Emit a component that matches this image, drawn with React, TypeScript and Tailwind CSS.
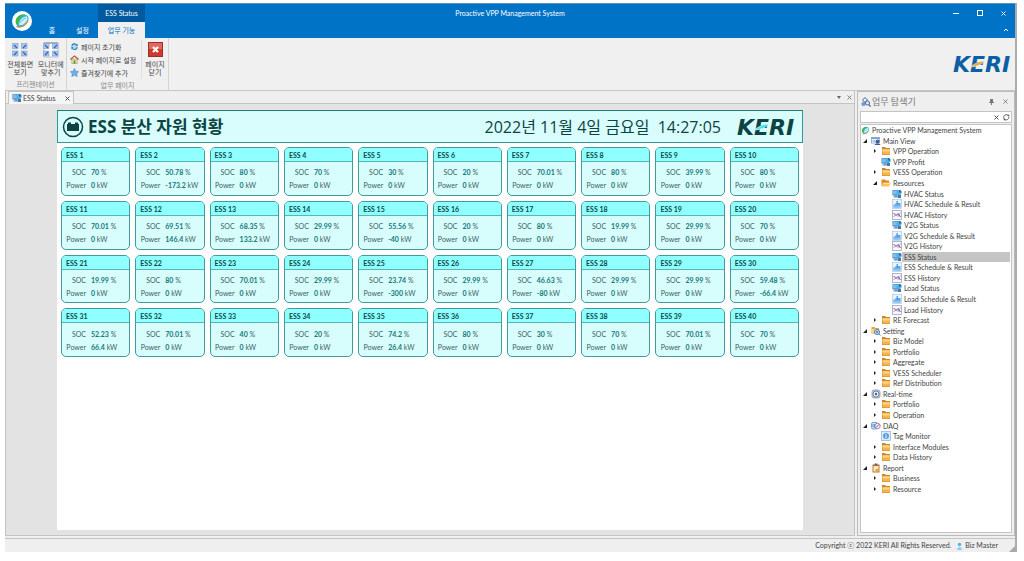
import React, { useState } from "react";

type Unit = { soc: string; power: string };

type IconName =
  | "globe"
  | "view"
  | "folder"
  | "open"
  | "status"
  | "schedule"
  | "history"
  | "setting"
  | "realtime"
  | "daq"
  | "tag"
  | "report";

type Node = {
  label: string;
  level: number;
  icon: IconName;
  state?: "open" | "closed";
};

const units: Unit[] = [
  { soc: "70", power: "0" },
  { soc: "50.78", power: "-173.2" },
  { soc: "80", power: "0" },
  { soc: "70", power: "0" },
  { soc: "30", power: "0" },
  { soc: "20", power: "0" },
  { soc: "70.01", power: "0" },
  { soc: "80", power: "0" },
  { soc: "39.99", power: "0" },
  { soc: "80", power: "0" },
  { soc: "70.01", power: "0" },
  { soc: "69.51", power: "146.4" },
  { soc: "68.35", power: "133.2" },
  { soc: "29.99", power: "0" },
  { soc: "55.56", power: "-40" },
  { soc: "20", power: "0" },
  { soc: "80", power: "0" },
  { soc: "19.99", power: "0" },
  { soc: "29.99", power: "0" },
  { soc: "70", power: "0" },
  { soc: "19.99", power: "0" },
  { soc: "80", power: "0" },
  { soc: "70.01", power: "0" },
  { soc: "29.99", power: "0" },
  { soc: "23.74", power: "-300" },
  { soc: "29.99", power: "0" },
  { soc: "46.63", power: "-80" },
  { soc: "29.99", power: "0" },
  { soc: "29.99", power: "0" },
  { soc: "59.48", power: "-66.4" },
  { soc: "52.23", power: "66.4" },
  { soc: "70.01", power: "0" },
  { soc: "40", power: "0" },
  { soc: "20", power: "0" },
  { soc: "74.2", power: "26.4" },
  { soc: "80", power: "0" },
  { soc: "30", power: "0" },
  { soc: "70", power: "0" },
  { soc: "70.01", power: "0" },
  { soc: "70", power: "0" },
];

const nodes: Node[] = [
  { label: "Proactive VPP Management System", level: 0, icon: "globe" },
  { label: "Main View", level: 1, icon: "view", state: "open" },
  { label: "VPP Operation", level: 2, icon: "folder", state: "closed" },
  { label: "VPP Profit", level: 2, icon: "status" },
  { label: "VESS Operation", level: 2, icon: "folder", state: "closed" },
  { label: "Resources", level: 2, icon: "open", state: "open" },
  { label: "HVAC Status", level: 3, icon: "status" },
  { label: "HVAC Schedule & Result", level: 3, icon: "schedule" },
  { label: "HVAC History", level: 3, icon: "history" },
  { label: "V2G Status", level: 3, icon: "status" },
  { label: "V2G Schedule & Result", level: 3, icon: "schedule" },
  { label: "V2G History", level: 3, icon: "history" },
  { label: "ESS Status", level: 3, icon: "status" },
  { label: "ESS Schedule & Result", level: 3, icon: "schedule" },
  { label: "ESS History", level: 3, icon: "history" },
  { label: "Load Status", level: 3, icon: "status" },
  { label: "Load Schedule & Result", level: 3, icon: "schedule" },
  { label: "Load History", level: 3, icon: "history" },
  { label: "RE Forecast", level: 2, icon: "folder", state: "closed" },
  { label: "Setting", level: 1, icon: "setting", state: "open" },
  { label: "Biz Model", level: 2, icon: "folder", state: "closed" },
  { label: "Portfolio", level: 2, icon: "folder", state: "closed" },
  { label: "Aggregate", level: 2, icon: "folder", state: "closed" },
  { label: "VESS Scheduler", level: 2, icon: "folder", state: "closed" },
  { label: "Ref Distribution", level: 2, icon: "folder", state: "closed" },
  { label: "Real-time", level: 1, icon: "realtime", state: "open" },
  { label: "Portfolio", level: 2, icon: "folder", state: "closed" },
  { label: "Operation", level: 2, icon: "folder", state: "closed" },
  { label: "DAQ", level: 1, icon: "daq", state: "open" },
  { label: "Tag Monitor", level: 2, icon: "tag" },
  { label: "Interface Modules", level: 2, icon: "folder", state: "closed" },
  { label: "Data History", level: 2, icon: "folder", state: "closed" },
  { label: "Report", level: 1, icon: "report", state: "open" },
  { label: "Business", level: 2, icon: "folder", state: "closed" },
  { label: "Resource", level: 2, icon: "folder", state: "closed" },
];

const indent = ["pl-0", "pl-px", "pl-[11px]", "pl-[22px]"];

const Globe = ({ className }: { className: string }) => (
  <svg viewBox="0 0 20 20" className={className} aria-hidden="true">
    <path d="M3 14 C1 8 5 2 12 2 C17 2 19 5 18 8 C17 14 12 18 7 18 C5 18 4 17 3 14Z" fill="#35b5d8" />
    <path d="M2 10 C3 4 8 1 14 2 C9 4 6 8 5 14 L3 14 C2 13 2 11 2 10Z" fill="#43b649" />
    <path d="M6 14 C7 9 10 5 16 4 C18 7 16 11 13 13 C11 15 8 16 6 14Z" fill="#d3f0f7" />
    <path d="M3 17 C8 19 15 16 18 9" fill="none" stroke="#e8902e" strokeWidth="1.3" />
    <path d="M7 13 C9 10 11 8 15 6" fill="none" stroke="#35b5d8" strokeWidth="1" />
  </svg>
);

const drawings: Record<Exclude<IconName, "globe">, React.ReactNode> = {
  view: (
    <>
      <rect x="1" y="3" width="16" height="11" fill="#fff" stroke="#7f9cc4" strokeWidth="1.5" />
      <rect x="1" y="3" width="16" height="3" fill="#7aa2d6" />
      <circle cx="13" cy="11" r="4" fill="#3d5f92" />
      <path d="M7 18 C8 14 18 14 19 18Z" fill="#3d5f92" />
      <rect x="3" y="8" width="5" height="4" fill="#a9c8ee" />
    </>
  ),
  folder: (
    <>
      <path d="M2 2 H8 L10 4 H18 V18 H2Z" fill="#cf8626" />
      <path d="M3 6 H18 V17 H3Z" fill="#f3b54f" />
      <path d="M3 7 H17 V11 H3Z" fill="#fbd58a" />
    </>
  ),
  open: (
    <>
      <path d="M1 3 H8 L10 5 H16 V16 H1Z" fill="#d98b23" />
      <path d="M4 9 H20 L16 17 H1Z" fill="#f8c35f" />
      <path d="M5 10 H18 L17 12 H4Z" fill="#fde5a9" />
    </>
  ),
  status: (
    <>
      <rect x="1" y="2" width="15" height="11" rx="1" fill="#3a7fc0" />
      <rect x="2" y="3" width="10" height="8" fill="#79c0f0" />
      <path d="M5 13 H11 V15 H13 V17 H3 V15 H5Z" fill="#6c8fb3" />
      <circle cx="14" cy="7" r="5" fill="#4bb0e6" />
      <path d="M14 2 A5 5 0 0 1 19 7 H14Z" fill="#2b66a3" />
      <path d="M12 12 H18 V18 H12Z" fill="#4479ae" />
    </>
  ),
  schedule: (
    <>
      <rect x="1" y="1" width="18" height="18" fill="#eaf4fd" stroke="#8db5dc" />
      <path d="M3 11 H7 V8 H9 V4 H12 V8 H17 V17 H3Z" fill="#5ba2e0" />
      <path d="M3 13 H17 V17 H3Z" fill="#8cc0ee" />
    </>
  ),
  history: (
    <>
      <rect x="1" y="1" width="18" height="18" fill="#f7f8fd" stroke="#9aa0bd" strokeWidth="1.5" />
      <path d="M3 6 L8 11 L12 7 L17 14" fill="none" stroke="#6d4c9b" strokeWidth="2" />
      <path d="M3 14 L8 9 L12 13 L17 5" fill="none" stroke="#9a7bb8" strokeWidth="1.5" />
    </>
  ),
  setting: (
    <>
      <path d="M1 2 H7 L9 4 H16 V15 H1Z" fill="#e8a23b" />
      <path d="M1 6 H13 V15 H1Z" fill="#fbd48a" />
      <circle cx="12" cy="12" r="5" fill="#cfe2f7" stroke="#4b78b6" strokeWidth="2" />
      <circle cx="12" cy="12" r="2" fill="#4b78b6" />
      <path d="M15 15 L19 19" stroke="#4b78b6" strokeWidth="2" />
    </>
  ),
  realtime: (
    <>
      <rect x="2" y="2" width="16" height="16" rx="4" fill="#c7d0dd" stroke="#8592a7" strokeWidth="1.5" />
      <circle cx="10" cy="10" r="6" fill="#eef3fa" stroke="#4f6486" strokeWidth="1.5" />
      <circle cx="10" cy="10" r="2.5" fill="#3d68a8" />
    </>
  ),
  daq: (
    <>
      <rect x="1" y="3" width="12" height="13" rx="3" fill="#d7e6f8" stroke="#5c86bd" strokeWidth="1.5" />
      <circle cx="13" cy="10" r="5.5" fill="#f5eef5" stroke="#6a6fa8" strokeWidth="1.5" />
      <path d="M10 13 L16 7" stroke="#c8366a" strokeWidth="2" />
      <path d="M4 6 V13 M7 6 V13" stroke="#3e78bd" strokeWidth="1.5" />
    </>
  ),
  tag: (
    <>
      <rect x="1" y="1" width="18" height="18" fill="#dcebfa" stroke="#8db5dc" strokeWidth="1.5" />
      <circle cx="10" cy="10" r="6" fill="#5d9ddb" />
      <path d="M10 6 V7.5 M10 9 V14" stroke="#fff" strokeWidth="2" />
    </>
  ),
  report: (
    <>
      <rect x="3" y="3" width="14" height="16" fill="#c3762b" />
      <rect x="5" y="6" width="10" height="11" fill="#fbe8c8" />
      <rect x="7" y="1" width="6" height="5" fill="#7b6a58" />
      <path d="M10 12 H15 V17 H8Z" fill="#e8a23b" />
    </>
  ),
};

const TreeIcon = ({ name }: { name: IconName }) =>
  name === "globe" ? (
    <Globe className="size-[9px] shrink-0" />
  ) : (
    <svg viewBox="0 0 20 20" className="size-[10px] shrink-0" aria-hidden="true">
      {drawings[name]}
    </svg>
  );

const Logo = ({ color, swoosh, gap }: { color: string; swoosh: string; gap: string }) => (
  <svg viewBox="0 0 62 28" className="h-[28px] w-[62px] shrink-0 overflow-visible" role="img" aria-label="KERI">
    <text x="0" y="22" fontFamily="DejaVu Sans" fontWeight="700" fontStyle="italic" fontSize="22" fill={color}>
      KERI
    </text>
    <path d="M15 17 C21 16 23 11 32 11 C29 13 27 17 15 17Z" fill={swoosh} stroke={gap} strokeWidth="0.7" />
  </svg>
);

const Close = ({ className }: { className: string }) => (
  <svg viewBox="0 0 10 10" className={className} aria-hidden="true">
    <path d="M1 1 L9 9 M9 1 L1 9" stroke="currentColor" strokeWidth="1.8" />
  </svg>
);

const ScreenIcon = ({ framed }: { framed?: boolean }) => (
  <svg viewBox="0 0 16 16" className="size-[16px]" aria-hidden="true">
    {framed && <path d="M1 1 H15 V15 H1Z" fill="#fff" stroke="#b9c3d4" />}
    {framed && <path d="M1 1 H15" stroke="#9f7f93" />}
    <g fill="#a9c5ec" stroke="#7f9fd0" strokeWidth="0.6">
      <rect x="0.5" y="1.5" width="5.5" height="5" />
      <rect x="9.5" y="1.5" width="5.5" height="5" />
      <rect x="0.5" y="9" width="5.5" height="5" />
      <rect x="9.5" y="9" width="5.5" height="5" />
    </g>
    <path d="M2 3 L5 6 M14 3 L11 6 M2 13 L5 10 M14 13 L11 10" stroke="#2f5fae" strokeWidth="1.2" />
  </svg>
);

const UnitCard = ({ index, unit }: { index: number; unit: Unit }) => (
  <article className="flex flex-col overflow-hidden rounded-[5px] border border-[#3f9c9c] bg-[#d7fdfd]">
    <h2 className="h-[14px] border-b border-[#5ab5b5] bg-[#8fffff] pl-1 text-[7px] leading-[15px] font-bold text-[#0c4a4a]">
      ESS {index}
    </h2>
    <dl className="grid flex-1 grid-cols-[20px_1fr] content-center gap-x-[5px] pt-[2px] pl-1 text-[7px] leading-[13px] whitespace-nowrap text-[#3d5f62]">
      <dt className="text-right">SOC</dt>
      <dd>
        <b className="text-[#14797a]">{unit.soc}</b> %
      </dd>
      <dt className="text-right">Power</dt>
      <dd>
        <b className="text-[#14797a]">{unit.power}</b> kW
      </dd>
    </dl>
  </article>
);

const TitleBar = () => (
  <header className="grid h-[35px] shrink-0 grid-cols-[1fr_auto_1fr] border-t border-[#5f8fb4] bg-[#0173c7] text-[7px] text-white">
    <div className="flex">
      <button aria-label="Menu" className="ml-[7px] flex size-[20px] items-center justify-center self-center rounded-full bg-white">
        <Globe className="size-[16px]" />
      </button>
      <nav className="ml-[5px] grid grid-cols-[30px_31px_47px] grid-rows-[18px_16px] text-center leading-[16px]">
        <span className="col-start-3 bg-[#015a9d] leading-[18px]">ESS Status</span>
        <button className="row-start-2">홈</button>
        <button className="row-start-2">설정</button>
        <button className="row-start-2 bg-[#f0f0f0] text-[#0173c7]">업무 기능</button>
      </nav>
    </div>
    <h1 className="leading-[18px]">Proactive VPP Management System</h1>
    <div className="flex flex-col items-end justify-between pr-[6px]">
      <div className="flex h-[18px] items-center gap-[18px] pr-[3px]">
        <button aria-label="Minimize" className="h-px w-[6px] bg-white"></button>
        <button aria-label="Maximize" className="size-[6px] border border-white"></button>
        <button aria-label="Close">
          <Close className="size-[5px]" />
        </button>
      </div>
      <button aria-label="Collapse ribbon" className="mb-[6px]">
        <svg viewBox="0 0 6 4" className="h-[4px] w-[6px]" aria-hidden="true">
          <path d="M1 3 L3 1 L5 3" fill="none" stroke="#fff" />
        </svg>
      </button>
    </div>
  </header>
);

const Ribbon = () => (
  <div className="flex h-[53px] shrink-0 border-b border-[#c6c6c6] bg-[#f0f0f0] text-[7px] leading-[8px] text-[#444]">
    <section className="flex w-[62px] flex-col border-r border-[#d4d4d4] pt-1 text-center">
      <div className="flex flex-1 justify-around">
        <button className="flex w-[30px] flex-col items-center gap-[2px] whitespace-nowrap">
          <ScreenIcon />
          <span>전체화면<br />보기</span>
        </button>
        <button className="flex w-[30px] flex-col items-center gap-[2px] whitespace-nowrap">
          <ScreenIcon framed />
          <span>모니터에<br />맞추기</span>
        </button>
      </div>
      <p className="leading-[12px] text-[#888]">프리젠테이션</p>
    </section>
    <section className="flex w-[102px] flex-col border-r border-[#d4d4d4] pt-[2px]">
      <div className="flex flex-1">
        <div className="flex w-[75px] flex-col border-r border-[#dedede] pl-[3px] whitespace-nowrap">
          <button className="flex h-[13px] items-center gap-[2px]">
            <svg viewBox="0 0 20 20" className="size-[9px]" aria-hidden="true">
              <path d="M10 1 L19 10 H16 V17 H4 V10 H1Z" fill="#b9dbf2" />
              <path d="M4 9 A6 6 0 0 1 15 7 M16 11 A6 6 0 0 1 5 14" fill="none" stroke="#2a7fb9" strokeWidth="2.5" />
              <path d="M17 4 V9 H12Z M3 16 V11 H8Z" fill="#2a7fb9" />
            </svg>
            페이지 초기화
          </button>
          <button className="flex h-[13px] items-center gap-[2px]">
            <svg viewBox="0 0 20 20" className="size-[9px]" aria-hidden="true">
              <path d="M4 9 H16 V19 H4Z" fill="#f7e0a8" stroke="#8f7a3f" />
              <path d="M1 10 L10 2 L19 10" fill="none" stroke="#a2522a" strokeWidth="2.5" />
              <path d="M8 12 H12 V19 H8Z" fill="#3f9e46" />
            </svg>
            시작 페이지로 설정
          </button>
          <button className="flex h-[13px] items-center gap-[2px]">
            <svg viewBox="0 0 20 20" className="size-[9px]" aria-hidden="true">
              <path d="M10 1 L13 7 L19 8 L15 13 L16 19 L10 16 L4 19 L5 13 L1 8 L7 7Z" fill="#6db0ea" stroke="#2f74bb" />
            </svg>
            즐겨찾기에 추가
          </button>
        </div>
        <button className="flex flex-1 flex-col items-center gap-[3px] pt-[2px]">
          <svg viewBox="0 0 15 15" className="size-[15px]" aria-hidden="true">
            <rect x="0.5" y="0.5" width="14" height="14" fill="#cf3a2e" stroke="#96342c" />
            <rect x="1" y="1" width="13" height="6" fill="#e0685c" />
            <path d="M5 5 L10 10 M10 5 L5 10" stroke="#fff" strokeWidth="2.2" />
          </svg>
          <span>페이지<br />닫기</span>
        </button>
      </div>
      <p className="text-center leading-[12px] text-[#888]">업무 페이지</p>
    </section>
    <div className="flex flex-1 items-center justify-end">
      <Logo color="#0b5fa5" swoosh="#f2a62b" gap="#f0f0f0" />
    </div>
  </div>
);

const Explorer = ({ selected, onSelect }: { selected: string; onSelect: (label: string) => void }) => (
  <aside className="flex w-[158px] shrink-0 flex-col border border-[#bcbcbc] bg-[#efefef] px-[2px] pb-[2px]">
    <div className="flex h-[19px] items-center gap-px pl-px pr-[4px] text-[#777]">
      <svg viewBox="0 0 20 20" className="size-[10px]" aria-hidden="true">
        <path d="M8 1 L13 6 L8 11 L3 6Z" fill="none" stroke="#3f68a5" strokeWidth="2" />
        <circle cx="5" cy="14" r="3.5" fill="#7ea5d8" stroke="#3f68a5" />
        <circle cx="13" cy="12" r="4" fill="#e6effa" stroke="#3f68a5" strokeWidth="2" />
        <path d="M16 15 L19 19" stroke="#3f68a5" strokeWidth="2.5" />
      </svg>
      <h2 className="flex-1 text-[9px] leading-[14px]">업무 탐색기</h2>
      <button aria-label="Pin">
        <svg viewBox="0 0 5 7" className="h-[7px] w-[5px]" aria-hidden="true">
          <path d="M1 1 H4 V4 H1Z M0 4 H5 V5 H0Z M2 5 H3 V7 H2Z" fill="#777" />
        </svg>
      </button>
      <button aria-label="Close panel" className="ml-[8px]">
        <Close className="size-[5px]" />
      </button>
    </div>
    <div className="flex h-[12px] shrink-0 items-center gap-1 border border-[#c4c4c4] bg-white pr-px text-[#444]">
      <input aria-label="Search" className="h-[9px] min-w-0 flex-1 text-[7px] outline-none" />
      <button aria-label="Clear">
        <Close className="size-[5px]" />
      </button>
      <button aria-label="Refresh">
        <svg viewBox="0 0 10 10" className="size-[7px]" aria-hidden="true">
          <path d="M2 7 A3.5 3.5 0 0 1 7 2 M8 4 A3.5 3.5 0 0 1 3 8" fill="none" stroke="#555" strokeWidth="1.2" />
          <path d="M5 1 H9 V4Z M5 9 H1 V6Z" fill="#555" />
        </svg>
      </button>
    </div>
    <div className="mt-px flex-1 border border-[#c4c4c4] bg-white">
      <ul className="flex h-[369px] flex-col text-[7px] text-[#444]">
        {nodes.map((node, i) => (
          <li key={i} className={`flex min-h-0 flex-1 items-center pr-px ${indent[node.level]}`}>
            {node.level > 0 && node.level < 3 && (
              <span className="flex w-[9px] shrink-0 items-center pl-px">
                {node.state && (
                  <svg viewBox="0 0 4 4" className="size-[4px]" aria-hidden="true">
                    <path d={node.state === "open" ? "M4 0 V4 H0Z" : "M1 0 L3 2 L1 4Z"} fill="#222" />
                  </svg>
                )}
              </span>
            )}
            {node.level === 3 && <span className="w-[9px] shrink-0"></span>}
            <TreeIcon name={node.icon} />
            <button
              onClick={() => onSelect(node.label)}
              className={`h-full flex-1 pl-[2px] text-left leading-[10px] whitespace-nowrap ${
                node.label === selected ? "bg-[#c5c5c5]" : ""
              }`}
            >
              {node.label}
            </button>
          </li>
        ))}
      </ul>
    </div>
  </aside>
);

const App = () => {
  const [selected, setSelected] = useState("ESS Status");

  return (
    <div className="flex min-h-screen flex-col bg-white pt-[3px] pr-[7px] pb-[9px] pl-[5px] font-['Lato','Noto_Sans_CJK_KR',sans-serif]">
      <div className="flex flex-1 flex-col border-r-2 border-[#ababab] bg-[#efefef]">
        <TitleBar />
        <Ribbon />
        <div className="flex flex-1 gap-[2px]">
          <main className="flex min-w-0 flex-1 flex-col border-x border-b border-[#c4c4c4] bg-[#e3e3e3]">
            <div className="flex h-[13px] bg-[#efefef] text-[7px] text-[#444]">
              <div className="w-[2px] border-b border-[#c4c4c4]"></div>
              <div className="flex w-[66px] items-center gap-px border-x border-t border-[#c4c4c4] bg-[#f5f5f5] px-[3px]">
                <TreeIcon name="status" />
                <span className="flex-1 leading-[12px]">ESS Status</span>
                <button aria-label="Close tab">
                  <Close className="size-[5px]" />
                </button>
              </div>
              <div className="flex flex-1 items-center justify-end gap-[6px] border-b border-[#c4c4c4] pr-[2px] text-[#777]">
                <button aria-label="Tab list">
                  <svg viewBox="0 0 4 3" className="h-[3px] w-[4px]" aria-hidden="true">
                    <path d="M0 0 H4 L2 3Z" fill="#666" />
                  </svg>
                </button>
                <button aria-label="Close all">
                  <Close className="size-[5px]" />
                </button>
              </div>
            </div>
            <div className="flex flex-1 px-[51px] pt-[6px] pb-[5px]">
              <div className="flex-1 bg-white">
                <div className="flex h-[33px] items-center border border-[#2f9a94] border-t-[#1f7a70] bg-[#d9fdfd] pr-[3px] pl-1 font-['Open_Sans','Noto_Sans_CJK_KR',sans-serif] text-[#0c4444]">
                  <svg viewBox="0 0 22 22" className="mr-1 size-[22px]" aria-hidden="true">
                    <circle cx="11" cy="11" r="9.5" fill="none" stroke="#0c4444" strokeWidth="1.5" />
                    <path d="M5 8 H6 V6.5 H9 V8 H13 V6.5 H16 V8 H17 V15 H5Z" fill="#0c4444" />
                  </svg>
                  <h2 className="flex-1 text-[17px] leading-[24px] font-bold">ESS 분산 자원 현황</h2>
                  <time className="mr-[16px] text-[16px] leading-[24px]">2022년 11월 4일 금요일&nbsp; 14:27:05</time>
                  <Logo color="#0c4444" swoosh="#3fe0ea" gap="#d9fdfd" />
                </div>
                <div className="mx-1 mt-1 grid h-[210px] grid-cols-10 grid-rows-4 gap-[5px]">
                  {units.map((unit, i) => (
                    <UnitCard key={i} index={i + 1} unit={unit} />
                  ))}
                </div>
              </div>
            </div>
          </main>
          <Explorer selected={selected} onSelect={setSelected} />
        </div>
        <footer className="mt-[2px] flex h-[14px] shrink-0 items-center justify-end border-t border-[#c4c4c4] text-[7px] text-[#444]">
          <span>Copyright ⓒ 2022 KERI All Rights Reserved.</span>
          <svg viewBox="0 0 8 10" className="mr-[2px] ml-[5px] h-[8px] w-[7px]" aria-hidden="true">
            <circle cx="4" cy="3" r="2.2" fill="#55b4e6" />
            <path d="M1 10 C1 5 7 5 7 10Z" fill="#8ccdf0" />
          </svg>
          <span>Biz Master</span>
          <svg viewBox="0 0 6 6" className="ml-[11px] size-[6px] self-end" aria-hidden="true">
            <path d="M6 0 V6 H0Z" fill="#aaa" />
          </svg>
        </footer>
      </div>
    </div>
  );
};

export default App;
